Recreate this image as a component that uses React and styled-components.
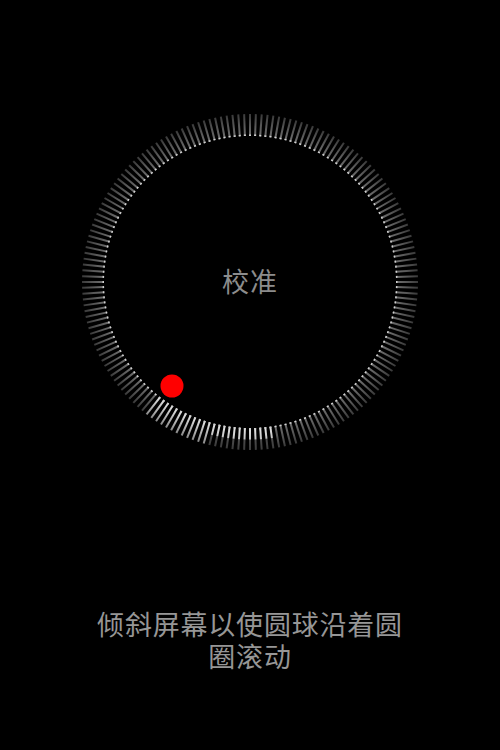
import styled, { createGlobalStyle } from "styled-components";

const GlobalStyle = createGlobalStyle`
  html, body {
    margin: 0;
    padding: 0;
    background: #000;
  }
`;

const Screen = styled.div`
  width: 500px;
  height: 750px;
  background: #000;
  display: flex;
  flex-direction: column;
  align-items: center;
  font-family: "Noto Sans CJK SC", "Noto Sans", sans-serif;
  overflow: hidden;
`;

const Dial = styled.div`
  margin-top: 112px;
  display: grid;
  width: 340px;
  height: 340px;

  & > * {
    grid-area: 1 / 1;
  }
`;

const Label = styled.div`
  align-self: center;
  justify-self: center;
  margin-bottom: 4px;
  color: #8c8c8c;
  font-size: 27px;
  line-height: 1;
  letter-spacing: 1px;
`;

const Hint = styled.p`
  margin: 156px 0 0;
  width: 316px;
  text-align: center;
  color: #969696;
  font-size: 27px;
  line-height: 32px;
  letter-spacing: 0.8px;
`;

const CX = 170;
const CY = 170;
const OUTER = 168;
const INNER = 146;

// ticks lit up behind the ball, by rotation angle from the top
const litFrom = 172;
const litTo = 218;

function Ring() {
  const ticks = [];
  for (let i = 0; i < 180; i++) {
    const a = i * 2;
    const lit = a >= litFrom && a <= litTo;
    const fill = lit
      ? a < 196
        ? "url(#tickHalf)"
        : "url(#tickLit)"
      : "url(#tick)";
    ticks.push(
      <g key={i} transform={`rotate(${a} ${CX} ${CY})`}>
        <rect x={CX - 1} y={CY - OUTER} width={2} height={OUTER - INNER} fill={fill} />
        <rect x={CX - 1} y={CY - INNER - 1.5} width={2} height={1.5} fill="#cfcfcf" />
      </g>
    );
  }

  return (
    <svg width="340" height="340" viewBox="0 0 340 340">
      <defs>
        <linearGradient id="tick" x1="0" y1="0" x2="0" y2="1">
          <stop offset="0" stopColor="#3a3a3a" />
          <stop offset="0.5" stopColor="#575757" />
          <stop offset="1" stopColor="#707070" />
        </linearGradient>
        <linearGradient id="tickLit" x1="0" y1="0" x2="0" y2="1">
          <stop offset="0" stopColor="#8a8a8a" />
          <stop offset="1" stopColor="#e6e6e6" />
        </linearGradient>
        <linearGradient id="tickHalf" x1="0" y1="0" x2="0" y2="1">
          <stop offset="0" stopColor="#3c3c3c" />
          <stop offset="0.45" stopColor="#4a4a4a" />
          <stop offset="0.5" stopColor="#c8c8c8" />
          <stop offset="1" stopColor="#e6e6e6" />
        </linearGradient>
      </defs>
      {ticks}
      <circle cx="92" cy="274" r="11.5" fill="#ff0000" />
    </svg>
  );
}

export default function App() {
  return (
    <>
      <GlobalStyle />
      <Screen>
        <Dial>
          <Ring />
          <Label>校准</Label>
        </Dial>
        <Hint>倾斜屏幕以使圆球沿着圆圈滚动</Hint>
      </Screen>
    </>
  );
}
